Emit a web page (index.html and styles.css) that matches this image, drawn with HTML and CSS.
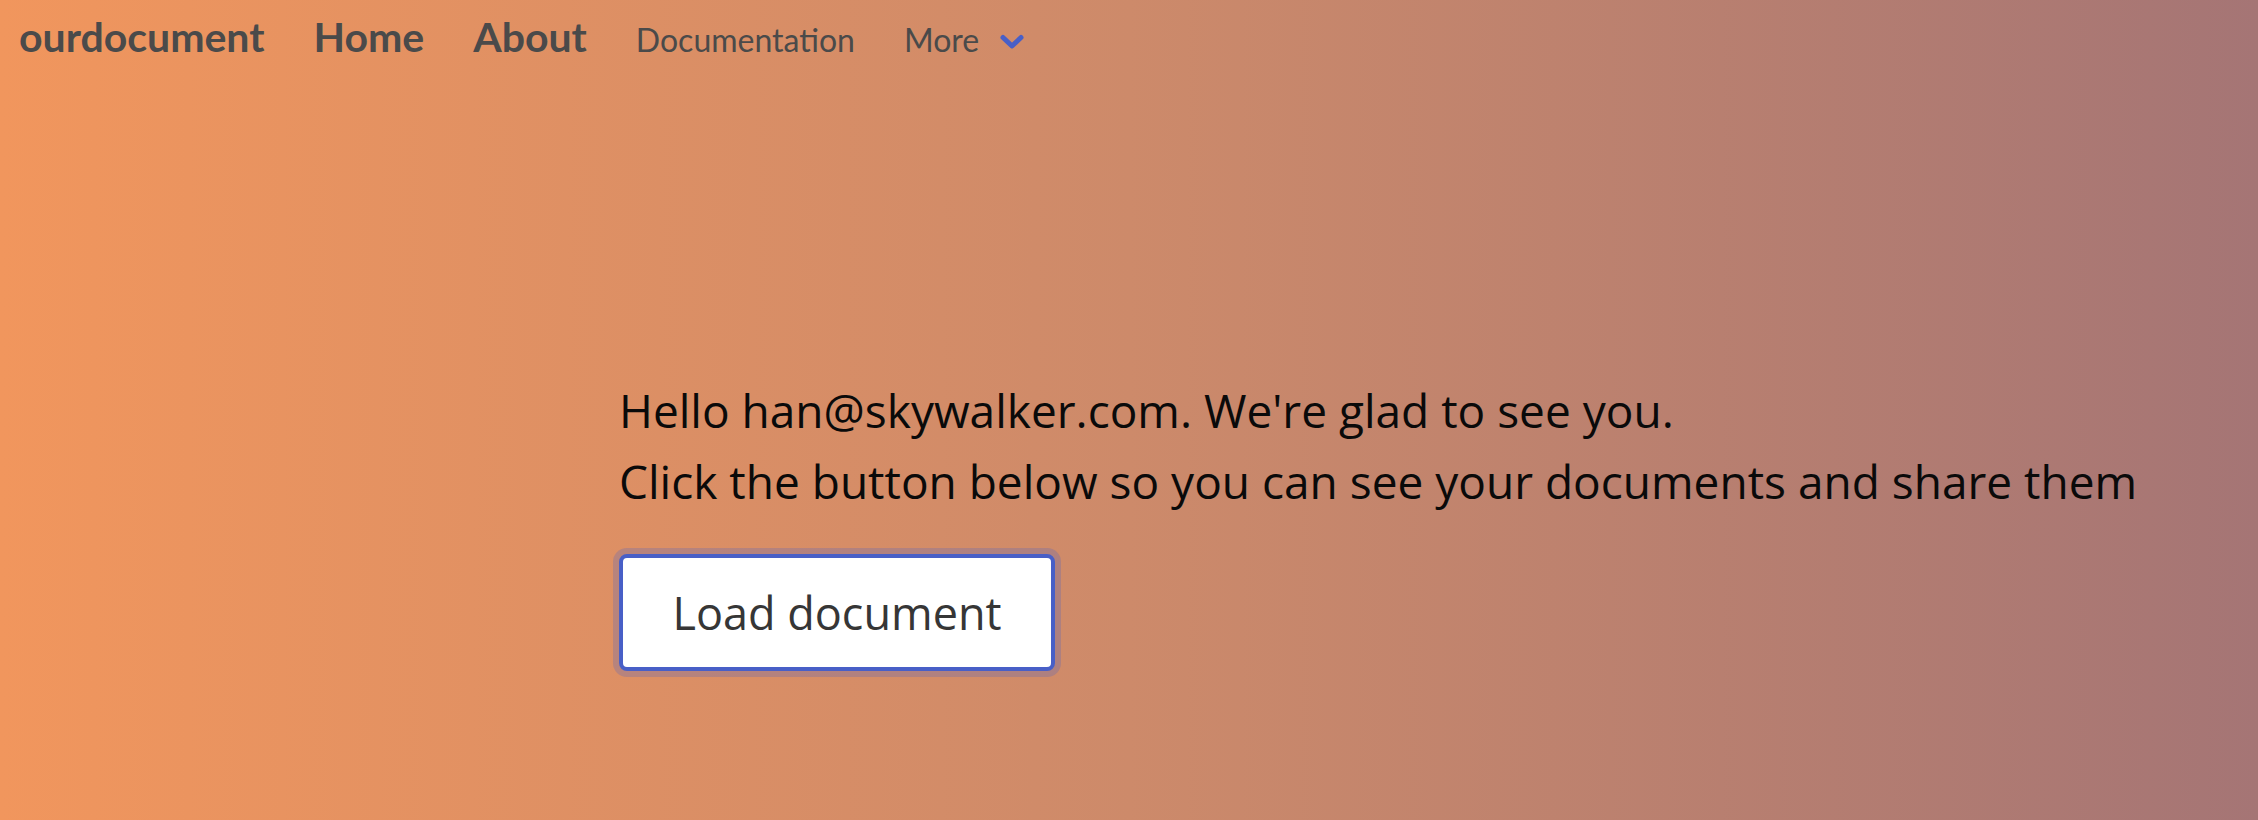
FILE: index.html
```html
<!DOCTYPE html>
<html lang="en">
<head>
<meta charset="utf-8">
<title>ourdocument</title>
<link rel="stylesheet" href="styles.css">
</head>
<body>
<div class="page">
  <nav class="navbar">
    <a class="nav-item strong">ourdocument</a>
    <a class="nav-item strong">Home</a>
    <a class="nav-item strong">About</a>
    <a class="nav-item">Documentation</a>
    <a class="nav-item more">More
      <svg class="chevron" width="26" height="16" viewBox="0 0 26 16"><polyline points="4,3.5 13,12 22,3.5" fill="none" stroke="#485fc7" stroke-width="5" stroke-linecap="round" stroke-linejoin="round"/></svg>
    </a>
  </nav>
  <main class="hero">
    <p class="line">Hello han@skywalker.com. We're glad to see you.</p>
    <p class="line">Click the button below so you can see your documents and share them</p>
    <button class="load-btn">Load document</button>
  </main>
</div>
</body>
</html>
```

FILE: styles.css
```css
html, body {
  margin: 0;
  padding: 0;
}
body {
  font-family: Lato, "Open Sans", sans-serif;
}
.page {
  width: 100%;
  height: 820px;
  background: linear-gradient(to right, #f1965d 0%, #cd8a6a 50%, #a57575 100%);
  overflow: hidden;
}
.navbar {
  display: flex;
  align-items: baseline;
  gap: 49px;
  padding: 17px 0 0 19px;
  height: 58px;
}
.nav-item {
  line-height: 40px;
  color: #4a4a4a;
  text-decoration: none;
  font-size: 32px;
  font-weight: 400;
}
.nav-item.strong {
  font-weight: 700;
  font-size: 41px;
}
.more {
  display: flex;
  align-items: center;
  gap: 20px;
}
.chevron {
  display: block;
  margin-top: 3px;
}
.hero {
  padding: 300px 0 0 619px;
}
.line {
  margin: 0;
  font-family: "Open Sans", Lato, sans-serif;
  font-size: 46px;
  line-height: 71px;
  color: #0a0a0a;
  white-space: nowrap;
}
.load-btn {
  margin-top: 37px;
  box-sizing: border-box;
  height: 117px;
  width: 436px;
  border: 4px solid #485fc7;
  border-radius: 8px;
  background: #fff;
  color: #363636;
  font-family: "Open Sans", Lato, sans-serif;
  font-size: 45px;
  box-shadow: 0 0 0 6px rgba(72, 95, 199, 0.25);
  padding: 0;
  cursor: pointer;
}
```
